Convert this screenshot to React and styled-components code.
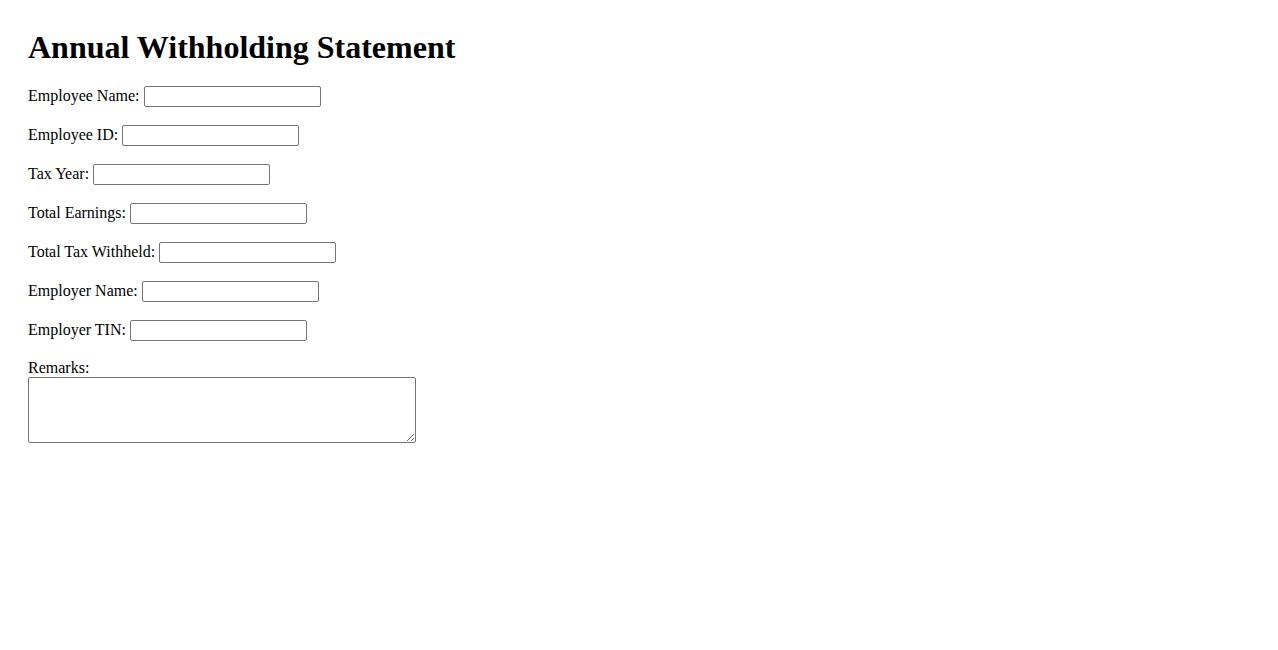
import React from 'react';
import styled, { createGlobalStyle } from 'styled-components';

const GlobalStyle = createGlobalStyle`
  body {
    margin: 8px;
    background: #ffffff;
    color: #000000;
    font-family: "Liberation Serif", "Times New Roman", serif;
    font-size: 16px;
  }
`;

const Page = styled.div`
  padding: 21px 20px 20px;
`;

const Title = styled.h1`
  font-size: 32px;
  font-weight: bold;
  margin: 0 0 20.44px;
`;

const Field = styled.div`
  margin: 0 0 18px;
`;

const Label = styled.label`
  display: ${(p) => (p.$block ? 'block' : 'inline')};
`;

const TextInput = styled.input`
  box-sizing: border-box;
  width: 177px;
  height: 21px;
  margin: 0 0 0 4px;
  padding: 1px 2px;
  border: 1px solid #767676;
  border-radius: 2px;
  font-family: "Liberation Sans", Arial, sans-serif;
  font-size: 13.33px;
  vertical-align: baseline;
`;

const TextArea = styled.textarea`
  box-sizing: border-box;
  display: block;
  width: 388px;
  height: 66px;
  margin: 0;
  padding: 2px;
  border: 1px solid #767676;
  border-radius: 2px;
  font-family: "Liberation Mono", monospace;
  font-size: 13.33px;
`;

const fields = [
  { id: 'employeeName', label: 'Employee Name:' },
  { id: 'employeeId', label: 'Employee ID:' },
  { id: 'taxYear', label: 'Tax Year:' },
  { id: 'totalEarnings', label: 'Total Earnings:' },
  { id: 'totalTax', label: 'Total Tax Withheld:' },
  { id: 'employerName', label: 'Employer Name:' },
  { id: 'employerTin', label: 'Employer TIN:' },
];

const App = () => (
  <Page>
    <GlobalStyle />
    <Title>Annual Withholding Statement</Title>
    <form>
      {fields.map((f) => (
        <Field key={f.id}>
          <Label htmlFor={f.id}>{f.label}</Label>
          <TextInput type="text" id={f.id} name={f.id} />
        </Field>
      ))}
      <Field>
        <Label htmlFor="remarks" $block>
          Remarks:
        </Label>
        <TextArea id="remarks" name="remarks" />
      </Field>
    </form>
  </Page>
);

export default App;
